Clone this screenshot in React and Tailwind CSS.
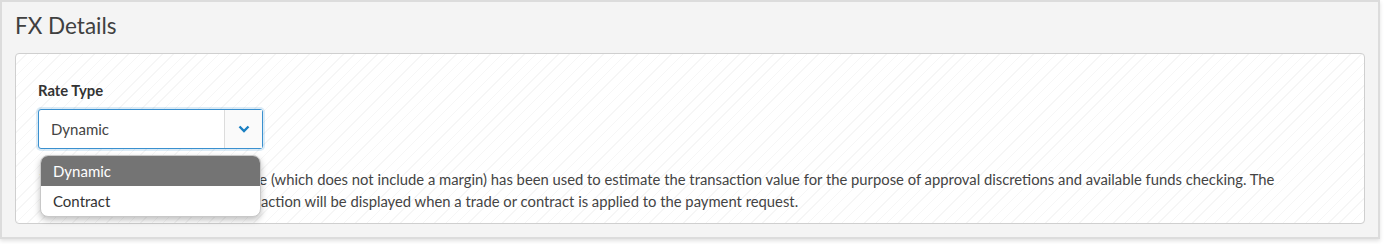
import React from 'react';

function Chevron() {
  return (
    <svg className="w-[12px] h-[8px]" viewBox="0 0 12 8" fill="none" stroke="#1a7fc1" strokeWidth={2.4}>
      <path d="M1.5 1.5 L6 6 L10.5 1.5" />
    </svg>
  );
}

function RateSelect() {
  return (
    <div className="relative w-[225px]">
      <div className="flex h-[40px] rounded-[3px] border border-[#3a90cf] bg-white shadow-[0_0_0_2px_rgba(58,144,207,0.18)]">
        <div className="flex flex-1 items-center pl-[12px] text-[15px] text-[#444]">Dynamic</div>
        <div className="flex w-[38px] items-center justify-center border-l border-[#dcdcdc] bg-[#fafafa]">
          <Chevron />
        </div>
      </div>

      <div className="absolute left-[2px] top-[46px] z-10 w-[221px] overflow-hidden rounded-[8px] border border-[#c8c8c8] bg-white shadow-[0_3px_6px_rgba(0,0,0,0.25)]">
        <div className="flex h-[30px] items-center bg-[#747474] pl-[12px] text-[15px] text-white">Dynamic</div>
        <div className="flex h-[30px] items-center pl-[12px] text-[15px] text-[#333]">Contract</div>
      </div>
    </div>
  );
}

export default function App() {
  return (
    <div className="bg-white h-[244px]" style={{ fontFamily: 'Lato, "Noto Sans", sans-serif' }}>
      <div className="w-[1380px] h-[239px] border-2 border-[#dcdcdc] bg-[#f4f4f4] shadow-[0_2px_4px_rgba(0,0,0,0.12)]">
        <h2 className="pl-[13px] pt-[9px] text-[22.5px] leading-[30px] text-[#404040]">FX Details</h2>

        <div className="ml-[13px] mt-[12px] w-[1350px] h-[171px] rounded-[4px] border border-[#cfcfcf] bg-[repeating-linear-gradient(135deg,#ffffff_0px,#ffffff_7px,#f6f6f6_7px,#f6f6f6_8px)] pl-[22px] pr-[40px] pt-[26px]">
          <label className="block text-[14.8px] font-bold leading-[20px] text-[#333]">Rate Type</label>
          <div className="mt-[9px]">
            <RateSelect />
          </div>
          <p className="mt-[19px] pl-[2px] text-[14.8px] leading-[22px] text-[#444]">
            The indicative dynamic market rate (which does not include a margin) has been used to estimate the transaction value for the purpose of approval discretions and available funds checking. The exchange rate used with this transaction will be displayed when a trade or contract is applied to the payment request.
          </p>
        </div>
      </div>
    </div>
  );
}
